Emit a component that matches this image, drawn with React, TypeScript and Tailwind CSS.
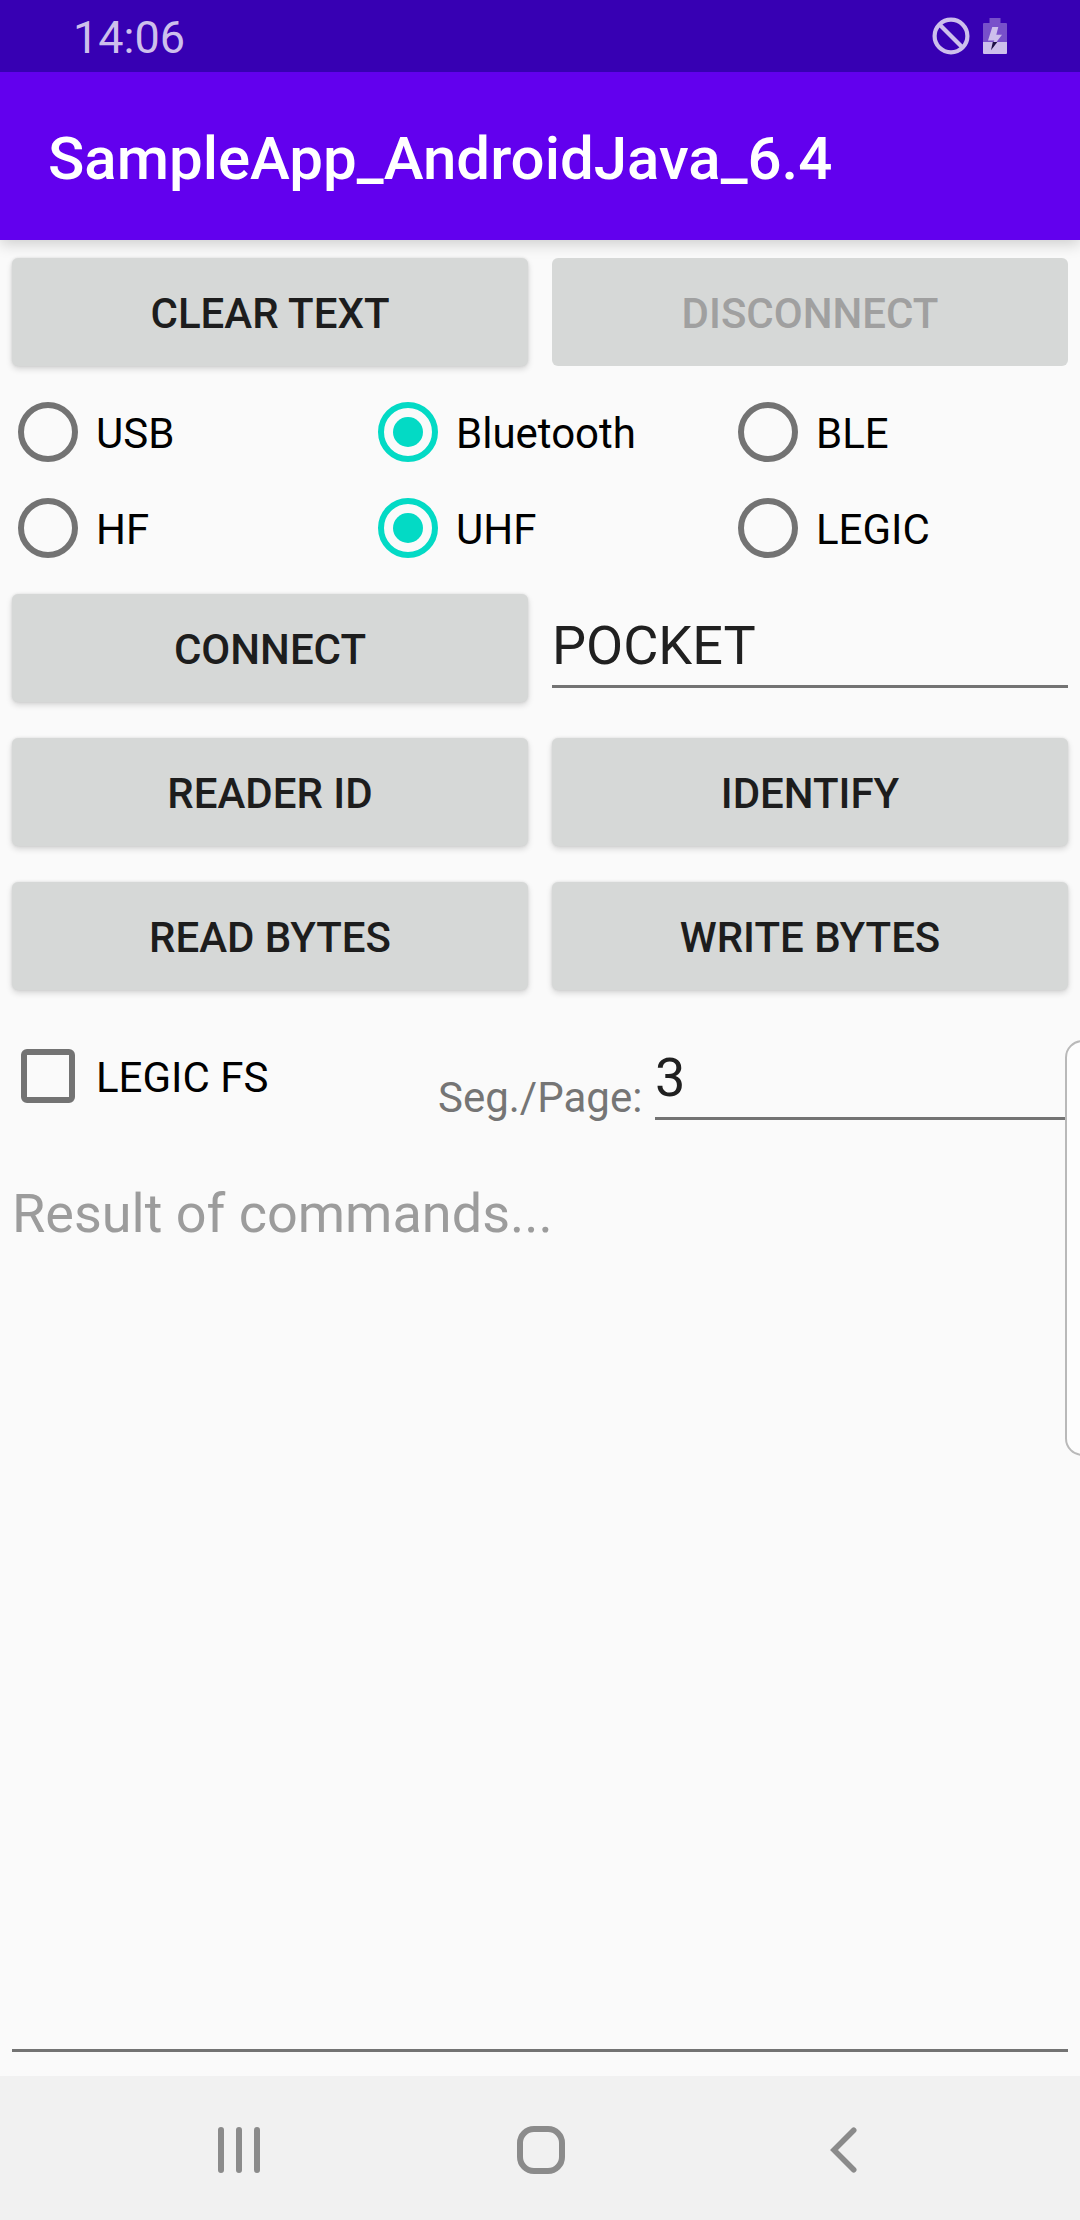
import React from "react";

function AppButton({ label, disabled = false }: { label: string; disabled?: boolean }) {
  return (
    <button
      disabled={disabled}
      className={
        "flex h-[108px] w-[516px] items-center justify-center rounded-[6px] bg-[#d6d8d7] pt-[3px] text-[42px] font-medium " +
        (disabled ? "text-[#a0a0a0]" : "text-[#1d1d1d] shadow-[0_3px_6px_rgba(0,0,0,0.15),0_0_3px_rgba(0,0,0,0.1)]")
      }
    >
      {label}
    </button>
  );
}

function Radio({ label, checked = false }: { label: string; checked?: boolean }) {
  return (
    <label className="flex h-24 items-center pl-[18px]">
      <span
        className={
          "flex h-[60px] w-[60px] items-center justify-center rounded-full border-[6px] " +
          (checked ? "border-[#03dac5]" : "border-[#737373]")
        }
      >
        {checked && <span className="h-[30px] w-[30px] rounded-full bg-[#03dac5]" />}
      </span>
      <span className="pt-[3px] pl-[18px] text-[42px] text-black">{label}</span>
    </label>
  );
}

function StatusBar() {
  return (
    <div className="relative z-10 flex h-[72px] items-start justify-between bg-[#3700b3] px-[73px]">
      <span className="mt-[11px] text-[45px] leading-[53px] text-[#cdbfec]">14:06</span>
      <div className="flex gap-[13px] pt-[17px]">
        <svg width="38" height="38" viewBox="0 0 38 38" fill="none" stroke="#cdbfec" strokeWidth="4.2">
          <circle cx="19" cy="19" r="16.4" />
          <path d="M7.5 7.5 30.5 30.5" />
        </svg>
        <svg width="24" height="38" viewBox="0 0 24 38">
          <path d="M6.5 1h11v5H23a1 1 0 0 1 1 1v18H0V7a1 1 0 0 1 1-1h5.5z" fill="#7850ca" />
          <path d="M0 25h24v11a1 1 0 0 1-1 1H1a1 1 0 0 1-1-1z" fill="#cdbfec" />
          <path d="M9.3 10h6l-2 7.7h5.7L13.5 25H10.5L11.3 23.6H5z" fill="#cdbfec" />
          <path d="M9.8 25h4.5L8 33.2z" fill="#1d0f45" />
        </svg>
      </div>
    </div>
  );
}

function NavBar() {
  return (
    <div className="flex h-[144px] items-center bg-[#f1f1f1] pt-1 text-[#8b8b8b]">
      <svg className="ml-[215px]" width="48" height="48" viewBox="0 0 48 48" stroke="currentColor" strokeWidth="6" strokeLinecap="round">
        <path d="M6 4v40M24 4v40M42 4v40" />
      </svg>
      <svg className="ml-[254px]" width="48" height="48" viewBox="0 0 48 48" fill="none" stroke="currentColor" strokeWidth="6">
        <rect x="3" y="3" width="42" height="42" rx="14" />
      </svg>
      <svg className="ml-[257px]" width="48" height="48" viewBox="0 0 48 48" fill="none" stroke="currentColor" strokeWidth="5.6" strokeLinecap="round">
        <path d="M31.7 4.3 12 24 31.7 43.7" />
      </svg>
    </div>
  );
}

export default function App() {
  return (
    <div className="relative flex h-[2220px] w-[1080px] flex-col overflow-hidden bg-[#fafafa] font-['Roboto',sans-serif]">
      <StatusBar />
      <header className="flex h-[168px] items-center bg-[#6200ee] pt-[6px] pl-12 text-[60px] font-medium text-white shadow-[0_4px_14px_rgba(0,0,0,0.18)]">
        SampleApp_AndroidJava_6.4
      </header>

      <main className="flex grow flex-col">
        <div className="flex h-36 items-center gap-6 px-3">
          <AppButton label="CLEAR TEXT" />
          <AppButton label="DISCONNECT" disabled />
        </div>
        <div className="grid grid-cols-3">
          <Radio label="USB" />
          <Radio label="Bluetooth" checked />
          <Radio label="BLE" />
          <Radio label="HF" />
          <Radio label="UHF" checked />
          <Radio label="LEGIC" />
        </div>
        <div className="flex h-36 items-center gap-6 px-3">
          <AppButton label="CONNECT" />
          <div className="mt-[38px] h-[74px] w-[516px] self-start border-b-[3px] border-[#737373] text-[54px] leading-[63px] text-[#202020]">
            POCKET
          </div>
        </div>
        <div className="flex h-36 items-center gap-6 px-3">
          <AppButton label="READER ID" />
          <AppButton label="IDENTIFY" />
        </div>
        <div className="flex h-36 items-center gap-6 px-3">
          <AppButton label="READ BYTES" />
          <AppButton label="WRITE BYTES" />
        </div>
        <div className="flex h-36 items-start pr-3">
          <label className="mt-5 flex h-24 w-[438px] items-center pl-[21px]">
            <span className="h-[54px] w-[54px] rounded-[6px] border-[6px] border-[#737373]" />
            <span className="pt-[3px] pl-[21px] text-[42px] text-black">LEGIC FS</span>
          </label>
          <span className="mt-[65px] w-[217px] text-[42px] leading-[49px] text-[#757575]">Seg./Page:</span>
          <div className="mt-[38px] h-[74px] grow border-b-[3px] border-[#737373] text-[54px] leading-[63px] text-[#202020]">3</div>
        </div>
        <div className="mx-3 mt-[30px] mb-6 grow border-b-[3px] border-[#737373] text-[54px] leading-[63px] text-[#9c9c9c]">
          Result of commands...
        </div>
      </main>

      <NavBar />

      {/* edge panel handle floating over the right side */}
      <div className="absolute top-[1040px] -right-5 h-[416px] w-[35px] rounded-[20px] border-2 border-[#b9b9b9] bg-[#fdfdfd]" />
    </div>
  );
}
